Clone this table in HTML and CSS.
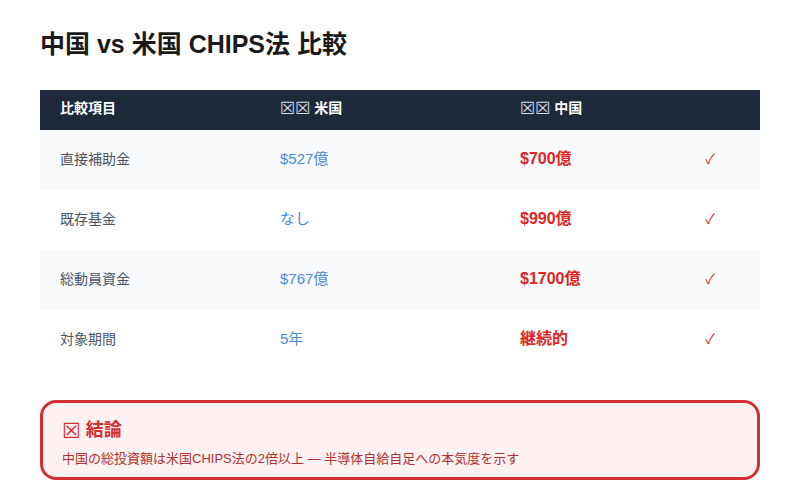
FILE: index.html
```html
<!DOCTYPE html>
<html lang="ja">
<head>
<meta charset="utf-8">
<link rel="stylesheet" href="styles.css">
</head>
<body>
<div class="page">
  <h1 class="title">中国 vs 米国 CHIPS法 比較</h1>
  <div class="table">
    <div class="row head">
      <div class="cell">比較項目</div>
      <div class="cell"><span class="tofu">☒☒</span> 米国</div>
      <div class="cell"><span class="tofu">☒☒</span> 中国</div>
      <div class="cell"></div>
    </div>
    <div class="row alt">
      <div class="cell item">直接補助金</div>
      <div class="cell us">$527億</div>
      <div class="cell cn">$700億</div>
      <div class="cell check">✓</div>
    </div>
    <div class="row">
      <div class="cell item">既存基金</div>
      <div class="cell us">なし</div>
      <div class="cell cn">$990億</div>
      <div class="cell check">✓</div>
    </div>
    <div class="row alt">
      <div class="cell item">総動員資金</div>
      <div class="cell us">$767億</div>
      <div class="cell cn">$1700億</div>
      <div class="cell check">✓</div>
    </div>
    <div class="row">
      <div class="cell item">対象期間</div>
      <div class="cell us">5年</div>
      <div class="cell cn">継続的</div>
      <div class="cell check">✓</div>
    </div>
  </div>
  <div class="note">
    <div class="note-title"><span class="tofu">☒</span> 結論</div>
    <div class="note-text">中国の総投資額は米国CHIPS法の2倍以上 — 半導体自給自足への本気度を示す</div>
  </div>
</div>
</body>
</html>
```
FILE: styles.css
```css
html, body {
  margin: 0;
  padding: 0;
  background: #ffffff;
}
body {
  font-family: "Liberation Sans", "Noto Sans CJK JP", sans-serif;
  color: #1f2937;
}
.page {
  padding: 28px 40px 0 40px;
}
.title {
  margin: 0;
  font-size: 25px;
  line-height: 32px;
  font-weight: 700;
  color: #1a1a1a;
}
.table {
  margin-top: 30px;
}
.row {
  display: grid;
  grid-template-columns: 220px 240px 160px 100px;
  height: 60px;
  box-sizing: border-box;
  padding-bottom: 3px;
  align-items: center;
  font-size: 14px;
}
.row.alt {
  background: #f8fafc;
}
.row.head {
  height: 40px;
  padding-bottom: 5px;
  background: #1e293b;
  color: #ffffff;
  font-weight: 700;
}
.cell {
  padding-left: 20px;
  line-height: 20px;
}
.tofu {
  font-family: "DejaVu Sans", sans-serif;
  font-weight: 400;
  font-size: 17px;
  line-height: 1;
  color: #d5dbe3;
  vertical-align: -1px;
}
.item {
  color: #4b5563;
}
.us {
  font-size: 15px;
  color: #4a8ad8;
}
.cn {
  font-size: 16px;
  color: #dc2626;
  font-weight: 700;
}
.check {
  padding-left: 0;
  text-align: center;
  color: #dc2626;
}
.note {
  margin-top: 30px;
  border: 3px solid #d32f2f;
  border-radius: 16px;
  background: #fef1f1;
  box-sizing: border-box;
  height: 80px;
  padding: 14px 19px 0 19px;
}
.note-title {
  font-size: 18px;
  line-height: 26px;
  font-weight: 700;
  color: #d32f2f;
}
.note-title .tofu {
  font-size: 21px;
  color: #d32f2f;
  vertical-align: -2px;
}
.note-text {
  margin-top: 6px;
  font-size: 13px;
  line-height: 20px;
  color: #b03030;
}
```
